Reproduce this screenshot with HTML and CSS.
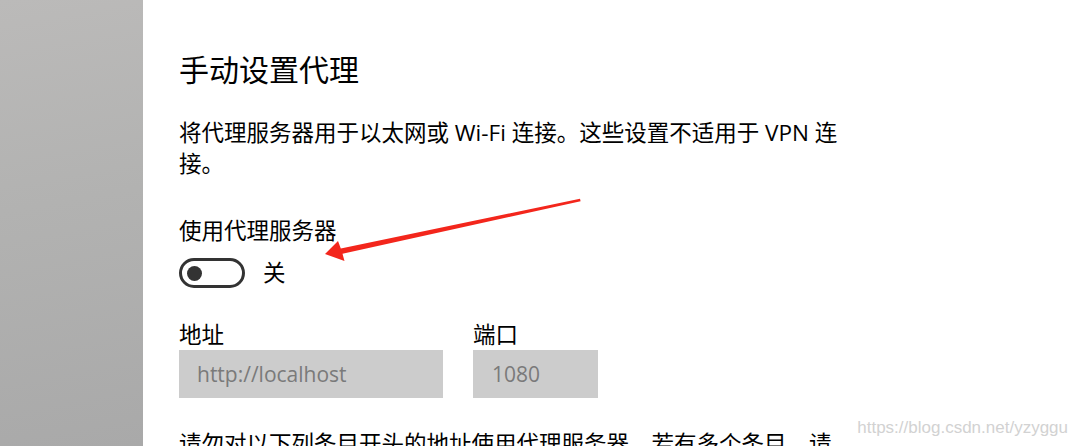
FILE: index.html
```html
<!DOCTYPE html>
<html lang="zh-CN">
<head>
  <meta charset="UTF-8">
  <meta name="viewport" content="width=device-width, initial-scale=1">
  <title>代理</title>
  <link rel="stylesheet" href="styles.css">
</head>
<body>

<div class="page">
  <div class="sidebar"></div>

  <div class="content">
    <h2 class="title">手动设置代理</h2>
    <p class="desc">将代理服务器用于以太网或 Wi-Fi 连接。这些设置不适用于 VPN 连接。</p>

    <div class="label">使用代理服务器</div>
    <div class="switch-row">
      <div class="switch"><span class="knob"></span></div>
      <span class="switch-text">关</span>
    </div>

    <div class="fields">
      <div class="field">
        <div class="label">地址</div>
        <div class="box addr">http://localhost</div>
      </div>
      <div class="field">
        <div class="label">端口</div>
        <div class="box port">1080</div>
      </div>
    </div>

    <p class="desc">请勿对以下列条目开头的地址使用代理服务器。若有多个条目，请使用英文分号 (;) 来分隔。</p>
  </div>

  <!-- annotation arrow drawn over the screenshot -->
  <svg class="arrow" width="1077" height="446" viewBox="0 0 1077 446">
    <polygon points="580,198.8 580.6,201.2 342.5,253.8 344.5,261 325,254 338,241 340.8,248.6" fill="#f3261c"/>
  </svg>

  <div class="watermark">https://blog.csdn.net/yzyggu</div>
</div>

</body>
</html>
```

FILE: styles.css
```css
body {
  margin: 0;
  padding: 0;
  background: #ffffff;
  font-family: 'Open Sans', 'Noto Sans CJK SC', sans-serif;
  color: #000000;
  overflow: hidden;
}
.page {
  position: relative;
  display: flex;
  width: 1077px;
  height: 446px;
  overflow: hidden;
}
.sidebar {
  width: 143px;
  flex-shrink: 0;
  background: linear-gradient(170deg, #bbbab9 0%, #b2b2b1 45%, #a9a9a9 100%);
}
.content {
  padding: 51px 0 0 36px;
}
.title {
  margin: 0;
  font-size: 30px;
  line-height: 37px;
  font-weight: normal;
}
.desc {
  margin: 29px 0 0;
  max-width: 666px;
  font-size: 22.5px;
  line-height: 31px;
}
.label {
  margin-top: 36px;
  font-size: 22.5px;
  line-height: 31px;
}
.switch-row {
  display: flex;
  align-items: center;
  gap: 18px;
  margin-top: 12px;
}
.switch {
  box-sizing: border-box;
  width: 66px;
  height: 30px;
  border: 3px solid #333333;
  border-radius: 15px;
  display: flex;
  align-items: center;
  padding-left: 5px;
}
.knob {
  width: 15px;
  height: 15px;
  border-radius: 50%;
  background: #333333;
}
.switch-text {
  font-size: 22.5px;
  line-height: 30px;
}
.fields {
  display: flex;
  gap: 30px;
  margin-top: 32px;
}
.field .label {
  margin-top: 0;
  line-height: 30px;
}
.box {
  box-sizing: border-box;
  height: 48px;
  background: #cccccc;
  color: #7a7a7a;
  font-size: 21px;
  line-height: 48px;
  padding-left: 18px;
}
.addr {
  width: 264px;
}
.port {
  width: 125px;
  padding-left: 19px;
}
.fields + .desc {
  margin-top: 30px;
}
.arrow {
  position: absolute;
  left: 0;
  top: 0;
  pointer-events: none;
}
.watermark {
  position: absolute;
  right: 9px;
  top: 418px;
  font-family: 'Liberation Sans', Arial, sans-serif;
  font-size: 17px;
  color: #d2d2d2;
}
```
